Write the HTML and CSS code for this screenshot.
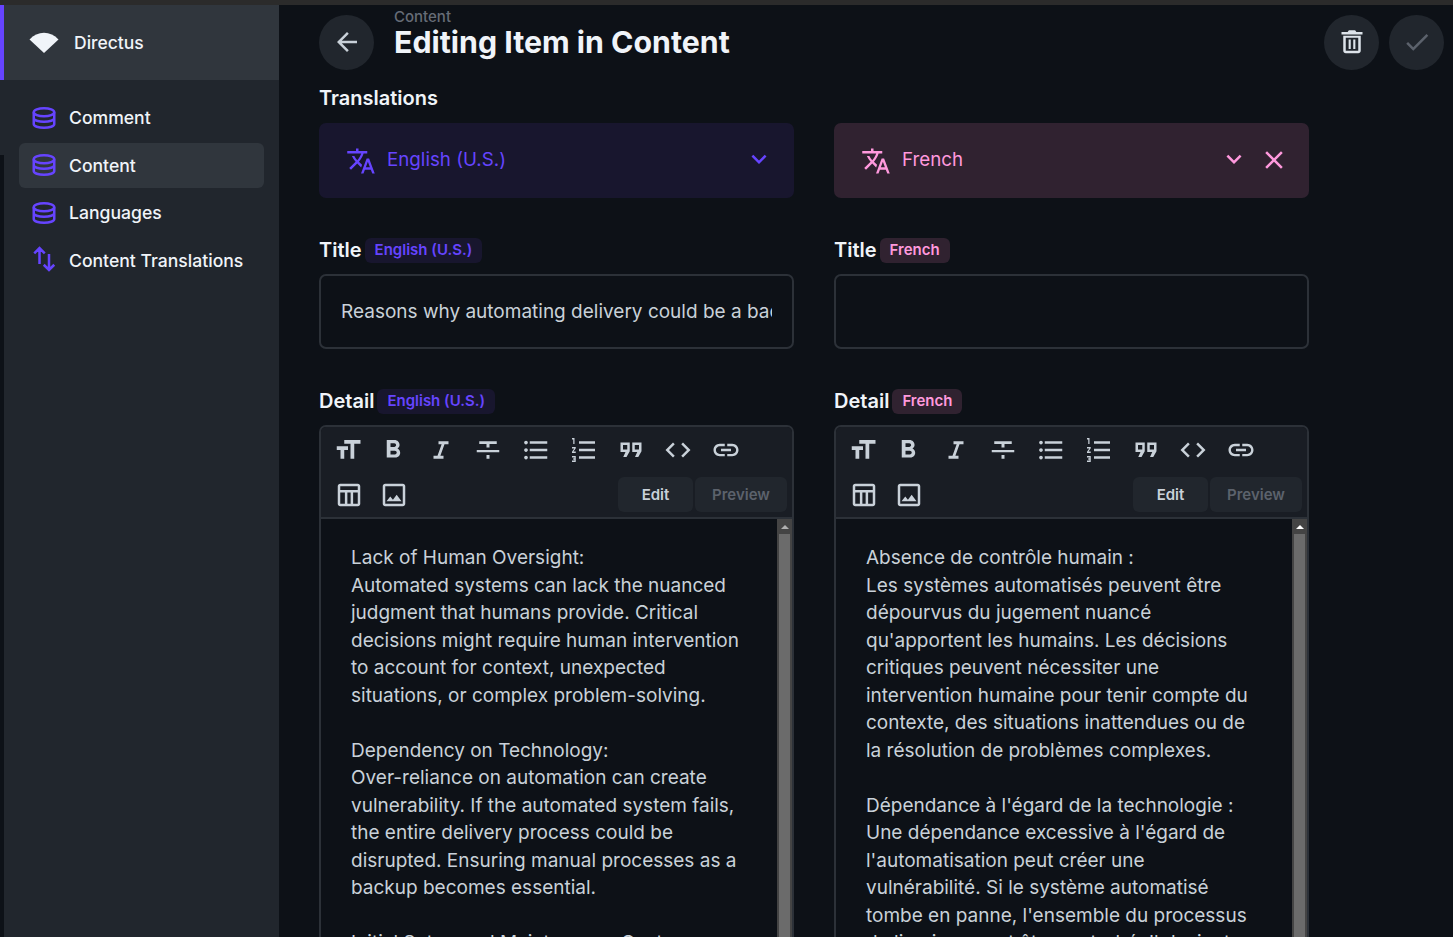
FILE: index.html
```html
<!DOCTYPE html>
<html lang="en">
<head>
    <meta charset="UTF-8">
    <title>Editing Item in Content</title>
    <link rel="stylesheet" href="styles.css">
</head>
<body>
    <div class="topline"></div>
    <div class="app">
        <div class="edge">
            <div class="edge-brand"></div>
            <div class="edge-nav"></div>
        </div>
        <aside class="sidebar">
            <div class="brand">
                <svg class="brand-logo" viewBox="0 0 30 21"><path d="M0.5 7.5C8.5 -1.5 21.5 -1.5 29.5 7.5L15 21z" fill="#f0f4f9"/></svg>
                <span>Directus</span>
            </div>
            <nav class="nav">
                <a class="nav-item">
                    <svg class="nav-icon" viewBox="0 0 24 24"><ellipse cx="12" cy="7.400" rx="8.200" ry="3.200"/><path d="M3.800 7.400V17c0 1.500 3.700 2.800 8.200 2.800s8.200-1.300 8.200-2.800V7.400M3.800 12.200c0 1.500 3.700 2.800 8.200 2.800s8.200-1.300 8.200-2.800"/></svg>
                    Comment
                </a>
                <a class="nav-item active">
                    <svg class="nav-icon" viewBox="0 0 24 24"><ellipse cx="12" cy="7.400" rx="8.200" ry="3.200"/><path d="M3.800 7.400V17c0 1.500 3.700 2.800 8.200 2.800s8.200-1.300 8.200-2.800V7.400M3.800 12.200c0 1.500 3.700 2.800 8.200 2.800s8.200-1.300 8.200-2.800"/></svg>
                    Content
                </a>
                <a class="nav-item">
                    <svg class="nav-icon" viewBox="0 0 24 24"><ellipse cx="12" cy="7.400" rx="8.200" ry="3.200"/><path d="M3.800 7.400V17c0 1.500 3.700 2.800 8.200 2.800s8.200-1.300 8.200-2.800V7.400M3.800 12.200c0 1.500 3.700 2.800 8.200 2.800s8.200-1.300 8.200-2.800"/></svg>
                    Languages
                </a>
                <a class="nav-item">
                    <svg class="nav-icon" viewBox="0 0 24 24"><path d="M8.400 15.200V2.500M4.200 6.700l4.200-4.200 4.200 4.200M16 7.200V20M11.800 15.800l4.200 4.200 4.200-4.200"/></svg>
                    Content Translations
                </a>
            </nav>
        </aside>
        <main class="main">
            <header class="header">
                <div class="header-left">
                    <button class="round-btn">
                        <svg viewBox="0 0 24 24"><path d="M20 11H7.830l5.590-5.590L12 4l-8 8 8 8 1.410-1.410L7.830 13H20v-2z"/></svg>
                    </button>
                    <div class="titles">
                        <div class="crumb">Content</div>
                        <h1>Editing Item in Content</h1>
                    </div>
                </div>
                <div class="actions">
                    <button class="round-btn light">
                        <svg viewBox="0 0 24 24"><path d="M9.500 2.500h5l1 1.500h4.900v2H3.600V4h4.900zM5 7h14v12c0 1.100-.9 2-2 2H7c-1.100 0-2-.9-2-2V7zM7 8.500V19h10V8.500zM9.300 10H11v7.500H9.300zM13 10h1.700v7.500H13z"/></svg>
                    </button>
                    <button class="round-btn dim">
                        <svg viewBox="0 0 24 24"><path d="M9 16.170L4.830 12l-1.420 1.410L9 19 21 7l-1.410-1.410z"/></svg>
                    </button>
                </div>
            </header>

            <div class="section-label">Translations</div>
            <div class="columns">
                <div class="col">
                    <div class="lang-select purple">
                        <svg class="lang-icon" viewBox="0 0 24 24"><path d="M12.870 15.070l-2.540-2.510.03-.03c1.740-1.940 2.980-4.170 3.710-6.530H17V4h-7V2H8v2H1v1.990h11.170C11.500 7.920 10.440 9.750 9 11.350 8.070 10.320 7.300 9.190 6.690 8h-2c.73 1.630 1.730 3.170 2.980 4.560l-5.090 5.020L4 19l5-5 3.110 3.110.76-2.040zM18.500 10h-2L12 22h2l1.120-3h4.750L21 22h2l-4.500-12zm-2.620 7l1.620-4.330L19.120 17h-3.240z"/></svg>
                        <span class="lang-name">English (U.S.)</span>
                        <svg class="lang-arrow" viewBox="0 0 24 24"><path d="M16.590 8.590L12 13.170 7.410 8.590 6 10l6 6 6-6z"/></svg>
                    </div>

                    <div class="field-label">Title <span class="pill purple">English (U.S.)</span></div>
                    <div class="text-input"><span>Reasons why automating delivery could be a bad idea for your business</span></div>

                    <div class="field-label">Detail <span class="pill purple">English (U.S.)</span></div>
                    <div class="editor">
                        <div class="toolbar">
                            <div class="tool-row">
                                <svg viewBox="0 0 24 24"><path d="M9 4v3h5v12h3V7h5V4H9zm-6 8h3v7h3v-7h3V9H3v3z"/></svg>
                                <svg viewBox="0 0 24 24"><path d="M15.600 10.790c.97-.67 1.650-1.770 1.650-2.790 0-2.260-1.750-4-4-4H7v14h7.040c2.090 0 3.710-1.700 3.710-3.790 0-1.520-.86-2.820-2.150-3.420zM10 6.500h3c.83 0 1.500.67 1.500 1.500s-.67 1.500-1.500 1.500h-3v-3zm3.500 9H10v-3h3.500c.83 0 1.500.67 1.500 1.500s-.67 1.500-1.500 1.500z"/></svg>
                                <svg viewBox="0 0 24 24"><path d="M10 5v2.400h2.500L9.200 16.600H6V19h8v-2.400h-2.500l3.300-9.200H18V5z"/></svg>
                                <svg viewBox="0 0 24 24"><path d="M10.800 19h2.400v-3h-2.400v3zM5 5v2.200h5.800V10h2.400V7.200H19V5H5zM3 13.800h18V12H3v1.800z"/></svg>
                                <svg viewBox="0 0 24 24"><path d="M4 10.500c-.83 0-1.500.67-1.500 1.500s.67 1.500 1.500 1.500 1.500-.67 1.500-1.500-.67-1.500-1.500-1.500zm0-6c-.83 0-1.500.67-1.500 1.500S3.170 7.500 4 7.500 5.500 6.830 5.500 6 4.830 4.500 4 4.500zm0 12c-.83 0-1.500.68-1.500 1.500s.68 1.500 1.500 1.500 1.500-.68 1.500-1.500-.67-1.500-1.500-1.500zM7 19h14v-2H7v2zm0-6h14v-2H7v2zm0-8v2h14V5H7z"/></svg>
                                <svg viewBox="0 0 24 24"><path transform="translate(1.200 -2.400) scale(1 1.200)" d="M2 17h2v.5H3v1h1v.5H2v1h3v-4H2v1zm1-9h1V4H2v1h1v3zm-1 3h1.800L2 13.100v.9h3v-1H3.200L5 10.900V10H2v1z"/><path d="M8.800 5v2h12.800V5zm0 14h12.800v-2H8.800zm0-6h12.800v-2H8.800z"/></svg>
                                <svg viewBox="0 0 24 24"><path d="M3.600 6H11v7l-2.600 4.500H5.800l1.800-4h-4zM5.600 8v3.500H9V8zM13 6h7.400v7l-2.600 4.500h-2.600l1.800-4h-4zM15 8v3.500h3.400V8z"/></svg>
                                <svg viewBox="0 0 24 24"><path d="M9.400 16.600L4.800 12l4.600-4.600L8 6l-6 6 6 6 1.400-1.400zm5.200 0l4.600-4.600-4.600-4.600L16 6l6 6-6 6-1.400-1.400z"/></svg>
                                <svg viewBox="0 0 24 24"><path d="M3.900 12c0-1.710 1.390-3.100 3.100-3.100h4V7H7c-2.760 0-5 2.240-5 5s2.240 5 5 5h4v-1.900H7c-1.710 0-3.100-1.390-3.100-3.100zM8 13h8v-2H8v2zm9-6h-4v1.900h4c1.710 0 3.100 1.390 3.100 3.100s-1.390 3.100-3.100 3.100h-4V17h4c2.760 0 5-2.240 5-5s-2.240-5-5-5z"/></svg>
                            </div>
                            <div class="tool-row second">
                                <svg viewBox="0 0 24 24"><path d="M5 3h14c1.100 0 2 .9 2 2v14c0 1.100-.9 2-2 2H5c-1.100 0-2-.9-2-2V5c0-1.100.9-2 2-2zm0 2v3h14V5H5zm0 5v9h3.700v-9H5zm5.700 0v9h2.600v-9h-2.600zm4.600 0v9H19v-9h-3.700z"/></svg>
                                <svg viewBox="0 0 24 24"><path d="M19 5v14H5V5h14m0-2H5c-1.100 0-2 .9-2 2v14c0 1.100.9 2 2 2h14c1.100 0 2-.9 2-2V5c0-1.100-.9-2-2-2zm-4.860 8.860l-3 3.870L9 13.140 6 17h12l-3.860-5.140z"/></svg>
                                <div class="mode-btns">
                                    <span class="mode-btn edit">Edit</span>
                                    <span class="mode-btn preview">Preview</span>
                                </div>
                            </div>
                        </div>
                        <div class="editor-body">
                            <div class="editor-text">
                                <p>Lack of Human Oversight:<br>Automated systems can lack the nuanced judgment that humans provide. Critical decisions might require human intervention to account for context, unexpected situations, or complex problem-solving.</p>
                                <p>Dependency on Technology:<br>Over-reliance on automation can create vulnerability. If the automated system fails, the entire delivery process could be disrupted. Ensuring manual processes as a backup becomes essential.</p>
                                <p>Initial Setup and Maintenance Costs:</p>
                            </div>
                            <div class="scrollbar"><div class="scroll-up"></div><div class="scroll-thumb"></div></div>
                        </div>
                    </div>
                </div>

                <div class="col">
                    <div class="lang-select pink">
                        <svg class="lang-icon" viewBox="0 0 24 24"><path d="M12.870 15.070l-2.540-2.510.03-.03c1.740-1.940 2.980-4.170 3.710-6.530H17V4h-7V2H8v2H1v1.990h11.170C11.500 7.920 10.440 9.750 9 11.350 8.070 10.320 7.300 9.190 6.690 8h-2c.73 1.630 1.730 3.170 2.980 4.560l-5.090 5.020L4 19l5-5 3.110 3.110.76-2.040zM18.500 10h-2L12 22h2l1.120-3h4.750L21 22h2l-4.500-12zm-2.620 7l1.620-4.330L19.120 17h-3.240z"/></svg>
                        <span class="lang-name">French</span>
                        <svg class="lang-arrow" viewBox="0 0 24 24"><path d="M16.590 8.590L12 13.170 7.410 8.590 6 10l6 6 6-6z"/></svg>
                        <svg class="lang-close" viewBox="0 0 24 24"><path d="M19 6.410L17.590 5 12 10.590 6.410 5 5 6.410 10.590 12 5 17.590 6.410 19 12 13.410 17.590 19 19 17.590 13.410 12z"/></svg>
                    </div>

                    <div class="field-label">Title <span class="pill pink">French</span></div>
                    <div class="text-input"></div>

                    <div class="field-label">Detail <span class="pill pink">French</span></div>
                    <div class="editor">
                        <div class="toolbar">
                            <div class="tool-row">
                                <svg viewBox="0 0 24 24"><path d="M9 4v3h5v12h3V7h5V4H9zm-6 8h3v7h3v-7h3V9H3v3z"/></svg>
                                <svg viewBox="0 0 24 24"><path d="M15.600 10.790c.97-.67 1.650-1.770 1.650-2.790 0-2.260-1.750-4-4-4H7v14h7.040c2.090 0 3.710-1.700 3.710-3.790 0-1.520-.86-2.820-2.150-3.420zM10 6.500h3c.83 0 1.500.67 1.500 1.500s-.67 1.500-1.500 1.500h-3v-3zm3.500 9H10v-3h3.500c.83 0 1.500.67 1.500 1.500s-.67 1.500-1.500 1.500z"/></svg>
                                <svg viewBox="0 0 24 24"><path d="M10 5v2.400h2.500L9.200 16.600H6V19h8v-2.400h-2.500l3.300-9.200H18V5z"/></svg>
                                <svg viewBox="0 0 24 24"><path d="M10.800 19h2.400v-3h-2.400v3zM5 5v2.200h5.800V10h2.400V7.200H19V5H5zM3 13.800h18V12H3v1.800z"/></svg>
                                <svg viewBox="0 0 24 24"><path d="M4 10.500c-.83 0-1.500.67-1.500 1.500s.67 1.500 1.500 1.500 1.500-.67 1.500-1.500-.67-1.500-1.500-1.500zm0-6c-.83 0-1.500.67-1.500 1.500S3.170 7.500 4 7.500 5.500 6.830 5.500 6 4.830 4.500 4 4.500zm0 12c-.83 0-1.500.68-1.500 1.500s.68 1.500 1.500 1.500 1.500-.68 1.500-1.500-.67-1.500-1.500-1.500zM7 19h14v-2H7v2zm0-6h14v-2H7v2zm0-8v2h14V5H7z"/></svg>
                                <svg viewBox="0 0 24 24"><path transform="translate(1.200 -2.400) scale(1 1.200)" d="M2 17h2v.5H3v1h1v.5H2v1h3v-4H2v1zm1-9h1V4H2v1h1v3zm-1 3h1.800L2 13.100v.9h3v-1H3.200L5 10.900V10H2v1z"/><path d="M8.800 5v2h12.800V5zm0 14h12.800v-2H8.800zm0-6h12.800v-2H8.800z"/></svg>
                                <svg viewBox="0 0 24 24"><path d="M3.600 6H11v7l-2.600 4.500H5.800l1.800-4h-4zM5.600 8v3.500H9V8zM13 6h7.400v7l-2.600 4.500h-2.600l1.800-4h-4zM15 8v3.500h3.400V8z"/></svg>
                                <svg viewBox="0 0 24 24"><path d="M9.400 16.600L4.800 12l4.600-4.600L8 6l-6 6 6 6 1.400-1.400zm5.200 0l4.600-4.600-4.600-4.600L16 6l6 6-6 6-1.400-1.400z"/></svg>
                                <svg viewBox="0 0 24 24"><path d="M3.900 12c0-1.710 1.390-3.100 3.100-3.100h4V7H7c-2.760 0-5 2.240-5 5s2.240 5 5 5h4v-1.900H7c-1.710 0-3.100-1.390-3.100-3.100zM8 13h8v-2H8v2zm9-6h-4v1.900h4c1.710 0 3.100 1.390 3.100 3.100s-1.390 3.100-3.100 3.100h-4V17h4c2.760 0 5-2.240 5-5s-2.240-5-5-5z"/></svg>
                            </div>
                            <div class="tool-row second">
                                <svg viewBox="0 0 24 24"><path d="M5 3h14c1.100 0 2 .9 2 2v14c0 1.100-.9 2-2 2H5c-1.100 0-2-.9-2-2V5c0-1.100.9-2 2-2zm0 2v3h14V5H5zm0 5v9h3.700v-9H5zm5.700 0v9h2.600v-9h-2.600zm4.600 0v9H19v-9h-3.700z"/></svg>
                                <svg viewBox="0 0 24 24"><path d="M19 5v14H5V5h14m0-2H5c-1.100 0-2 .9-2 2v14c0 1.100.9 2 2 2h14c1.100 0 2-.9 2-2V5c0-1.100-.9-2-2-2zm-4.860 8.860l-3 3.870L9 13.140 6 17h12l-3.860-5.140z"/></svg>
                                <div class="mode-btns">
                                    <span class="mode-btn edit">Edit</span>
                                    <span class="mode-btn preview">Preview</span>
                                </div>
                            </div>
                        </div>
                        <div class="editor-body">
                            <div class="editor-text">
                                <p>Absence de contrôle humain :<br>Les systèmes automatisés peuvent être dépourvus du jugement nuancé qu'apportent les humains. Les décisions critiques peuvent nécessiter une intervention humaine pour tenir compte du contexte, des situations inattendues ou de la résolution de problèmes complexes.</p>
                                <p>Dépendance à l'égard de la technologie :<br>Une dépendance excessive à l'égard de l'automatisation peut créer une vulnérabilité. Si le système automatisé tombe en panne, l'ensemble du processus de livraison peut être perturbé. Il devient</p>
                            </div>
                            <div class="scrollbar"><div class="scroll-up bright"></div><div class="scroll-thumb"></div></div>
                        </div>
                    </div>
                </div>
            </div>
        </main>
    </div>
</body>
</html>
```

FILE: styles.css
```css
* {
    box-sizing: border-box;
}
html, body {
    margin: 0;
    height: 100%;
    overflow: hidden;
}
body {
    font-family: Inter, "Noto Sans", sans-serif;
    background-color: #0d1117;
    color: #c9d1d9;
}
.topline {
    height: 5px;
    background-color: #2b2b2b;
}
.app {
    display: flex;
    height: 932px;
}

/* left edge */
.edge {
    width: 4px;
    flex-shrink: 0;
}
.edge-brand {
    height: 75px;
    background-color: #6644ff;
}
.edge-nav {
    height: 75px;
    background-color: #21262d;
}

/* sidebar */
.sidebar {
    width: 275px;
    flex-shrink: 0;
    background-color: #21262d;
}
.brand {
    height: 75px;
    display: flex;
    align-items: center;
    padding-left: 25px;
    gap: 15px;
    background-color: #30363d;
    color: #f0f4f9;
    font-size: 17.5px;
    font-weight: 500;
}
.brand-logo {
    width: 30px;
    height: 21px;
}
.nav {
    padding: 15px;
    display: flex;
    flex-direction: column;
    gap: 2.5px;
}
.nav-item {
    display: flex;
    align-items: center;
    height: 45px;
    padding-left: 10px;
    gap: 10px;
    border-radius: 6px;
    color: #f0f4f9;
    font-size: 17.6px;
    font-weight: 500;
}
.nav-item.active {
    background-color: #30363d;
}
.nav-icon {
    width: 30px;
    height: 30px;
    fill: none;
    stroke: #6644ff;
    stroke-width: 2;
}

/* main */
.main {
    flex: 1;
    padding: 0 9px 0 40px;
    overflow: hidden;
}
.header {
    display: flex;
    justify-content: space-between;
    height: 75px;
    padding-top: 10px;
}
.header-left {
    display: flex;
    gap: 20px;
}
.round-btn {
    width: 55px;
    height: 55px;
    padding: 0;
    border: none;
    border-radius: 50%;
    background-color: #21262d;
    display: flex;
    align-items: center;
    justify-content: center;
}
.round-btn svg {
    width: 30px;
    height: 30px;
    margin-bottom: 2px;
    fill: #c9d1d9;
}
.round-btn.light svg {
    fill: #dde3ea;
}
.round-btn.dim svg {
    fill: #5c626c;
}
.actions {
    display: flex;
    gap: 10px;
}
.titles {
    margin-top: -7px;
}
.crumb {
    font-size: 15px;
    line-height: 18px;
    font-weight: 500;
    color: #666c76;
}
h1 {
    margin: 0;
    font-size: 30.3px;
    line-height: 32px;
    font-weight: 700;
    color: #f0f4f9;
}
.section-label {
    height: 43px;
    padding-top: 6px;
    font-size: 20px;
    line-height: 24px;
    font-weight: 600;
    color: #f0f4f9;
}
.columns {
    display: grid;
    grid-template-columns: 475px 475px;
    gap: 40px;
}
.lang-select {
    height: 75px;
    display: flex;
    align-items: center;
    border-radius: 7px;
    padding: 0 20px 0 27px;
    font-size: 18.75px;
}
.lang-select.purple {
    background-color: #18162e;
    color: #6644ff;
    fill: #6644ff;
}
.lang-select.pink {
    background-color: #302230;
    color: #ff99dd;
    fill: #ff99dd;
}
.lang-icon {
    width: 30px;
    height: 30px;
    margin-right: 11px;
}
.lang-name {
    flex: 1;
    padding-bottom: 2px;
}
.lang-arrow {
    width: 30px;
    height: 30px;
    margin-bottom: 3px;
}
.lang-close {
    width: 30px;
    height: 30px;
    margin-left: 10px;
    margin-bottom: 1px;
}
.field-label {
    display: flex;
    align-items: flex-start;
    gap: 3px;
    height: 25px;
    margin: 40px 0 11px;
    font-size: 20px;
    line-height: 24px;
    font-weight: 600;
    color: #f0f4f9;
}
.pill {
    display: inline-flex;
    align-items: center;
    height: 25px;
    padding: 0 10px 2px;
    border-radius: 6px;
    font-size: 15px;
    font-weight: 600;
}
.pill.purple {
    background-color: #18162e;
    color: #6644ff;
}
.pill.pink {
    background-color: #302230;
    color: #ff99dd;
}
.text-input {
    height: 75px;
    padding: 0 20px;
    display: flex;
    align-items: center;
    border: 2px solid #2c3138;
    border-radius: 7px;
    font-size: 19px;
    color: #c9d1d9;
}
.text-input span {
    white-space: nowrap;
    overflow: hidden;
}

/* markdown editor */
.editor {
    border: 2px solid #2c3138;
    border-radius: 7px;
    height: 600px;
    overflow: hidden;
}
.toolbar {
    height: 92px;
    background-color: #191d24;
    border-bottom: 2px solid #2c3138;
    padding: 0 5px 0 2px;
}
.tool-row {
    display: flex;
    align-items: center;
    height: 45px;
    gap: 17.5px;
    padding-left: 10px;
}
.tool-row svg {
    width: 30px;
    height: 30px;
    flex-shrink: 0;
    fill: #c9d1d9;
}
.tool-row svg:first-child {
    margin-right: -2.5px;
}
.tool-row.second {
    gap: 14.5px;
    padding-left: 11px;
}
.tool-row.second svg:first-child {
    margin-right: 0;
}
.mode-btns {
    margin-left: auto;
    display: flex;
    gap: 2px;
}
.mode-btn {
    height: 35px;
    display: flex;
    align-items: center;
    justify-content: center;
    border-radius: 6px;
    background-color: #21262d;
    font-size: 15px;
    font-weight: 600;
}
.mode-btn.edit {
    width: 75px;
    color: #c9d1d9;
}
.mode-btn.preview {
    width: 92px;
    color: #5c626c;
}
.editor-body {
    position: relative;
    height: 500px;
    padding: 25.25px 50px 0 30px;
}
.editor-text {
    font-size: 19px;
    line-height: 27.5px;
    color: #c9d1d9;
}
.editor-text p {
    margin: 0 0 27.5px;
}
.scrollbar {
    position: absolute;
    top: 0;
    right: 0;
    width: 15px;
    height: 100%;
    background-color: #444444;
}
.scroll-up {
    width: 0;
    height: 0;
    margin: 6px auto 5px;
    border-left: 4px solid transparent;
    border-right: 4px solid transparent;
    border-bottom: 4px solid #b0b0b0;
}
.scroll-up.bright {
    border-bottom-color: #ffffff;
}
.scroll-thumb {
    width: 11px;
    height: 460px;
    margin: 0 auto;
    background-color: #6b6b6b;
}
```
